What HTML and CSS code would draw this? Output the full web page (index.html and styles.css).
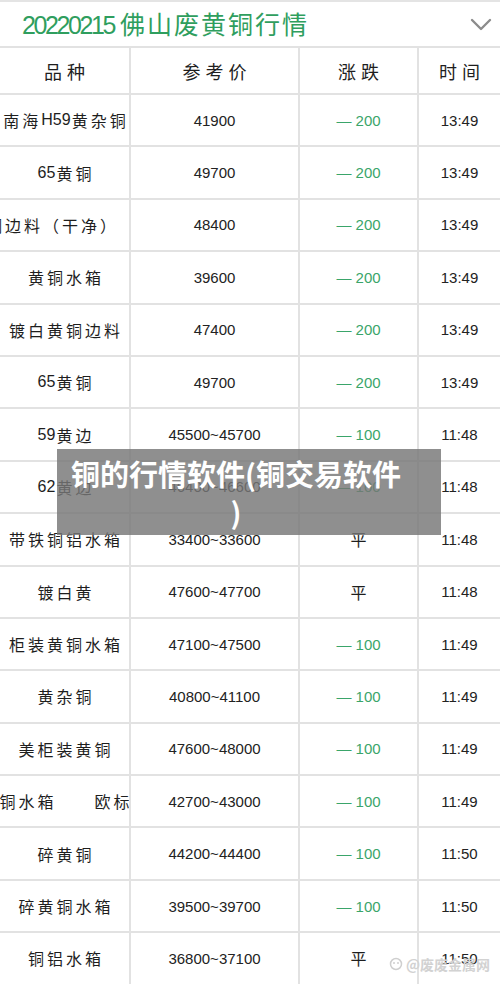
FILE: index.html
```html
<!DOCTYPE html>
<html lang="zh-CN">
<head>
  <meta charset="UTF-8">
  <title>铜的行情软件</title>
  <link rel="stylesheet" href="styles.css">
</head>
<body>

  <!-- 标题栏 -->
  <div class="titlebar">
    <h1 class="title"><span class="date">20220215</span>佛山废黄铜行情</h1>
    <svg class="chevron" width="22" height="14" viewBox="0 0 22 14">
      <path d="M2 2 L11 11 L20 2" fill="none" stroke="#8c8c8c" stroke-width="2.4" stroke-linecap="round" stroke-linejoin="round"/>
    </svg>
  </div>

  <!-- 行情表 -->
  <div class="sheet">
    <div class="cell head">品种</div>
    <div class="cell head">参考价</div>
    <div class="cell head">涨跌</div>
    <div class="cell head">时间</div>

    <div class="cell name">南海<span class="dg">H59</span>黄杂铜</div><div class="cell num">41900</div><div class="cell chg">— 200</div><div class="cell num">13:49</div>
    <div class="cell name"><span class="dg">65</span>黄铜</div><div class="cell num">49700</div><div class="cell chg">— 200</div><div class="cell num">13:49</div>
    <div class="cell name shift">铜边料（干净）</div><div class="cell num">48400</div><div class="cell chg">— 200</div><div class="cell num">13:49</div>
    <div class="cell name">黄铜水箱</div><div class="cell num">39600</div><div class="cell chg">— 200</div><div class="cell num">13:49</div>
    <div class="cell name">镀白黄铜边料</div><div class="cell num">47400</div><div class="cell chg">— 200</div><div class="cell num">13:49</div>
    <div class="cell name"><span class="dg">65</span>黄铜</div><div class="cell num">49700</div><div class="cell chg">— 200</div><div class="cell num">13:49</div>
    <div class="cell name"><span class="dg">59</span>黄边</div><div class="cell num">45500~45700</div><div class="cell chg">— 100</div><div class="cell num">11:48</div>
    <div class="cell name"><span class="dg">62</span>黄边</div><div class="cell num">46400~46600</div><div class="cell chg">— 100</div><div class="cell num">11:48</div>
    <div class="cell name">带铁铜铝水箱</div><div class="cell num">33400~33600</div><div class="cell flat">平</div><div class="cell num">11:48</div>
    <div class="cell name">镀白黄</div><div class="cell num">47600~47700</div><div class="cell flat">平</div><div class="cell num">11:48</div>
    <div class="cell name">柜装黄铜水箱</div><div class="cell num">47100~47500</div><div class="cell chg">— 100</div><div class="cell num">11:49</div>
    <div class="cell name">黄杂铜</div><div class="cell num">40800~41100</div><div class="cell chg">— 100</div><div class="cell num">11:49</div>
    <div class="cell name">美柜装黄铜</div><div class="cell num">47600~48000</div><div class="cell chg">— 100</div><div class="cell num">11:49</div>
    <div class="cell name">铜水箱　　欧标</div><div class="cell num">42700~43000</div><div class="cell chg">— 100</div><div class="cell num">11:49</div>
    <div class="cell name">碎黄铜</div><div class="cell num">44200~44400</div><div class="cell chg">— 100</div><div class="cell num">11:50</div>
    <div class="cell name">碎黄铜水箱</div><div class="cell num">39500~39700</div><div class="cell chg">— 100</div><div class="cell num">11:50</div>
    <div class="cell name">铜铝水箱</div><div class="cell num">36800~37100</div><div class="cell flat">平</div><div class="cell num">11:50</div>
  </div>

  <!-- 文章标题浮层 -->
  <div class="overlay">铜的行情软件(铜交易软件<br>)</div>

  <!-- 水印 -->
  <div class="watermark">
    <svg width="14" height="14" viewBox="0 0 14 14">
      <circle cx="7" cy="7" r="5.5" fill="none" stroke="#cfcfcf" stroke-width="1.5"/>
      <circle cx="5" cy="6" r="1" fill="#cfcfcf"/>
      <circle cx="9" cy="6" r="1" fill="#cfcfcf"/>
    </svg>
    <span>@废废金属网</span>
  </div>

</body>
</html>
```

FILE: styles.css
```css
body {
  margin: 0;
  width: 500px;
  height: 984px;
  overflow: hidden;
  position: relative;
  background: #fff;
  font-family: "Noto Sans CJK SC", "Noto Sans", sans-serif;
  color: #1e1e1e;
}

/* 标题栏 */
.titlebar {
  border-top: 2px solid #e4e4e4;
  height: 44px;
  display: flex;
  align-items: center;
  justify-content: space-between;
  padding: 0 8px 0 22px;
}

.title {
  margin: 0;
  font-size: 25px;
  font-weight: 400;
  color: #2f9e5e;
  letter-spacing: 2px;
  line-height: 1;
}

.title .date {
  font-family: "Liberation Sans", sans-serif;
  letter-spacing: -2.4px;
  margin-right: 6px;
}

.chevron {
  margin-top: 2px;
}

/* 表格 */
.sheet {
  display: grid;
  grid-template-columns: 129px 167px 117px 1fr;
  grid-template-rows: 45px repeat(17, 50.4px);
  gap: 2px;
  background: #e2e2e2;
  border-top: 2px solid #e2e2e2;
}

.cell {
  background: #fff;
  display: flex;
  align-items: center;
  justify-content: center;
  overflow: hidden;
  white-space: nowrap;
}

.head {
  font-size: 18px;
  letter-spacing: 5px;
  padding-left: 5px;
}

.name {
  font-size: 16px;
  letter-spacing: 3px;
  padding-left: 3px;
}

.name .dg {
  font-family: "Liberation Sans", sans-serif;
  letter-spacing: 0;
  margin-right: 1px;
}

.name.shift {
  justify-content: flex-end;
  padding-right: 10px;
}

.num {
  font-family: "Liberation Sans", sans-serif;
  font-size: 15px;
  color: #222;
}

.chg {
  font-family: "Liberation Sans", sans-serif;
  font-size: 15px;
  color: #3aa56a;
}

.flat {
  font-size: 16px;
}

/* 浮层 */
.overlay {
  position: absolute;
  left: 57px;
  top: 449px;
  width: 384px;
  height: 86px;
  box-sizing: border-box;
  padding: 5px 26px 0 0;
  background: rgba(118, 118, 118, 0.82);
  color: #fff;
  font-size: 29px;
  font-weight: 700;
  line-height: 38px;
  text-align: center;
}

/* 水印 */
.watermark {
  position: absolute;
  right: 10px;
  bottom: 10px;
  display: flex;
  align-items: center;
  gap: 3px;
  color: #d2d2d2;
  font-size: 14px;
  font-weight: 700;
}
```
